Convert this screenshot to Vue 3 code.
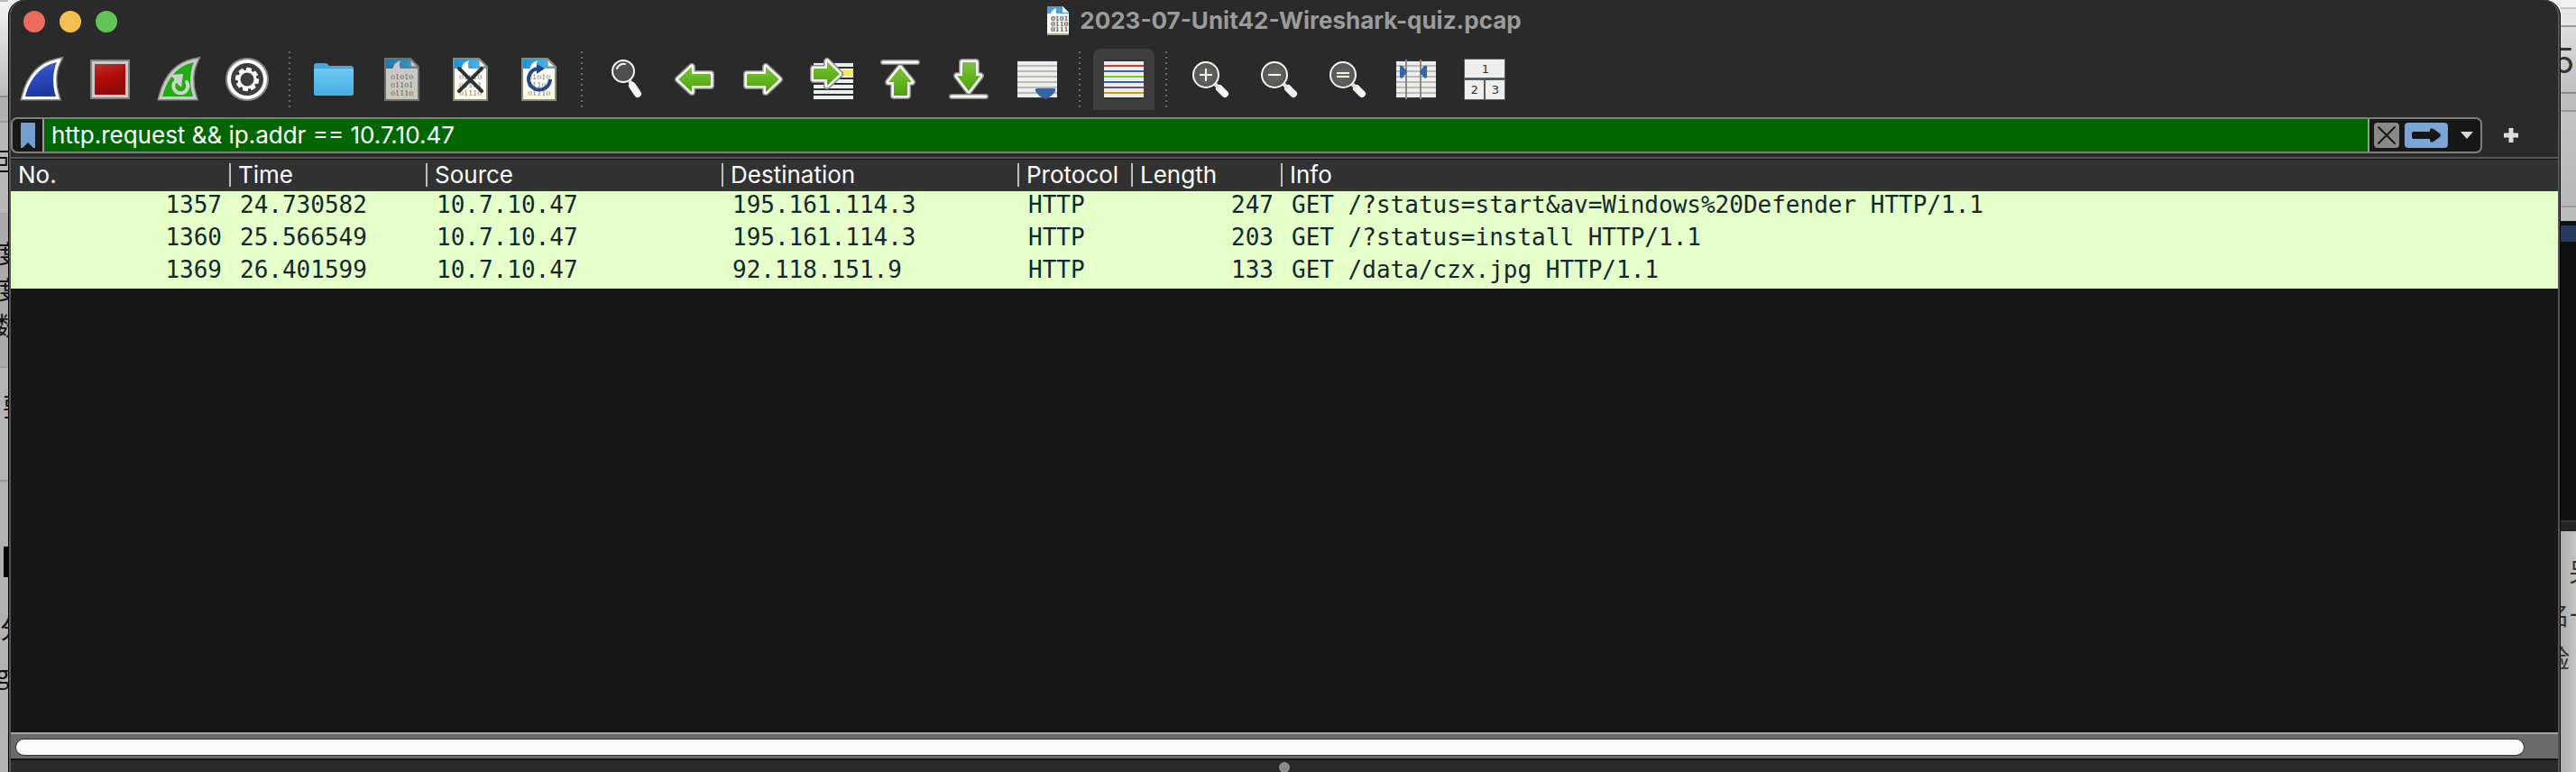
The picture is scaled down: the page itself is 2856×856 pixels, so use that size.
<script setup>
import { ref } from 'vue'

const filter = ref('http.request && ip.addr == 10.7.10.47')

const groups = [
  [
    { id: 'start', label: 'Start capturing packets' },
    { id: 'stop', label: 'Stop capturing packets' },
    { id: 'restart', label: 'Restart current capture' },
    { id: 'options', label: 'Capture options' },
  ],
  [
    { id: 'open', label: 'Open a capture file' },
    { id: 'save', label: 'Save this capture file' },
    { id: 'close', label: 'Close this capture file' },
    { id: 'reload', label: 'Reload this file' },
  ],
  [
    { id: 'find', label: 'Find a packet' },
    { id: 'back', label: 'Go back' },
    { id: 'forward', label: 'Go forward' },
    { id: 'goto', label: 'Go to packet' },
    { id: 'first', label: 'Go to first packet' },
    { id: 'last', label: 'Go to last packet' },
    { id: 'autoscroll', label: 'Auto scroll' },
  ],
  [{ id: 'colorize', label: 'Colorize packet list', active: true }],
  [
    { id: 'zoomin', label: 'Zoom in' },
    { id: 'zoomout', label: 'Zoom out' },
    { id: 'zoomreset', label: 'Normal size' },
    { id: 'columns', label: 'Resize columns' },
    { id: 'layout', label: 'Reset layout' },
  ],
]

const columns = [
  { key: 'no', title: 'No.', right: true },
  { key: 'time', title: 'Time' },
  { key: 'src', title: 'Source' },
  { key: 'dst', title: 'Destination' },
  { key: 'proto', title: 'Protocol' },
  { key: 'len', title: 'Length', right: true },
  { key: 'info', title: 'Info' },
]

const packets = [
  { no: '1357', time: '24.730582', src: '10.7.10.47', dst: '195.161.114.3', proto: 'HTTP', len: '247', info: 'GET /?status=start&av=Windows%20Defender HTTP/1.1' },
  { no: '1360', time: '25.566549', src: '10.7.10.47', dst: '195.161.114.3', proto: 'HTTP', len: '203', info: 'GET /?status=install HTTP/1.1' },
  { no: '1369', time: '26.401599', src: '10.7.10.47', dst: '92.118.151.9', proto: 'HTTP', len: '133', info: 'GET /data/czx.jpg HTTP/1.1' },
]

const ruleYs = [9, 15, 21, 27, 33, 39]
const ruleColors = ['#ef2929', '#3465a4', '#73d216', '#3465a4', '#75507b', '#c4a000']
const teeth = [0, 45, 90, 135, 180, 225, 270, 315]
const arrows = {
  back: 'M6 24L21 10V18H42V31H21V38Z',
  forward: 'M42 24L27 10V18H6V31H27V38Z',
  goto: 'M33 18L19 4V12H4V24H19V31Z',
  first: 'M24 11L37 27H32V42H17V27H11Z',
  last: 'M24 37L37 20H32V5H17V20H11Z',
}
</script>

<template>
  <div class="desktop">
    <div class="behind left" aria-hidden="true">
      <div class="l1"></div>
      <div class="l2"></div>
      <div class="l3"><span>距</span></div>
      <div class="l4"><span>度</span><span>度</span><span>数</span></div>
      <div class="l5"><span>要</span></div>
      <div class="l6"><i></i><span class="fen">分</span><span class="gee">g</span></div>
    </div>

    <main class="window">
      <header class="titlebar">
        <div class="lights">
          <button class="light red" aria-label="Close"></button>
          <button class="light yellow" aria-label="Minimize"></button>
          <button class="light green" aria-label="Zoom window"></button>
        </div>
        <h1 class="title">
          <svg width="24" height="32" viewBox="0 0 24 32">
            <path d="M0 0H17L24 7V32H0Z" fill="#fbfbee" />
            <path d="M0 0H17V7H24V8H0Z" fill="#4a9fd8" />
            <path d="M4 8Q6 3 10 2Q9 5 10 8Z" fill="#fff" />
            <path d="M17 0L24 7H17Z" fill="#eee" />
            <path d="M0 31H24" stroke="#a9a994" stroke-width="2" />
            <g class="bits" font-size="7" fill="#666">
              <text x="4" y="16">0101</text><text x="4" y="22">0110</text><text x="4" y="28">0111</text>
            </g>
          </svg>
          <span>2023-07-Unit42-Wireshark-quiz.pcap</span>
        </h1>
      </header>

      <nav class="toolbar" aria-label="Main toolbar">
        <svg class="defs" width="0" height="0" aria-hidden="true">
          <defs>
            <linearGradient id="gBlue" x1="0" y1="0" x2="0.3" y2="1"><stop offset="0" stop-color="#4a6fd4" /><stop offset="0.5" stop-color="#2a4bc0" /><stop offset="1" stop-color="#1f3a9c" /></linearGradient>
            <linearGradient id="gRed" x1="0" y1="0" x2="0.3" y2="1"><stop offset="0" stop-color="#b83430" /><stop offset="0.5" stop-color="#b00c0a" /><stop offset="1" stop-color="#8c0c0a" /></linearGradient>
            <linearGradient id="gGreen" x1="0" y1="0" x2="0" y2="1"><stop offset="0" stop-color="#7cc43a" /><stop offset="1" stop-color="#4ba40a" /></linearGradient>
            <linearGradient id="gFolder" x1="0" y1="0" x2="0" y2="1"><stop offset="0" stop-color="#6cc7f3" /><stop offset="1" stop-color="#46aee4" /></linearGradient>
            <linearGradient id="gSky" x1="0" y1="0" x2="1" y2="0"><stop offset="0" stop-color="#1c93d6" /><stop offset="1" stop-color="#42b4ee" /></linearGradient>
            <linearGradient id="gPaper" x1="0" y1="0" x2="0" y2="1"><stop offset="0.4" stop-color="#ffffff" /><stop offset="1" stop-color="#fffde0" /></linearGradient>
            <radialGradient id="gLens"><stop offset="0" stop-color="#6a6a68" /><stop offset="1" stop-color="#555553" /></radialGradient>
          </defs>
        </svg>
        <template v-for="(group, gi) in groups" :key="gi">
          <span v-if="gi" class="sep"></span>
          <div class="group">
            <button v-for="b in group" :key="b.id" class="tool" :class="{ active: b.active }" :aria-label="b.label">
              <svg width="48" height="48" viewBox="0 0 48 48">
                <template v-if="b.id === 'start' || b.id === 'restart'">
                  <path d="M6 43C11 24 22 9 41 5C36 16 36 31 40 43Z" stroke="#858585" stroke-width="9" stroke-miterlimit="3" />
                  <path d="M6 43C11 24 22 9 41 5C36 16 36 31 40 43Z" :stroke="b.id === 'start' ? '#fff' : '#c9c9c9'" stroke-width="6" stroke-miterlimit="3" />
                  <path d="M6 43C11 24 22 9 41 5C36 16 36 31 40 43Z" :fill="b.id === 'start' ? 'url(#gBlue)' : '#22ab12'" />
                  <g v-if="b.id === 'restart'">
                    <path d="M33 27A8 8 0 1 1 19 28" fill="none" stroke="#d0d0ce" stroke-width="4" stroke-linecap="round" />
                    <path d="M14 19L29 18L27 33L22 28L19 29V23Z" fill="#d0d0ce" />
                  </g>
                </template>
                <template v-else-if="b.id === 'stop'">
                  <rect x="2" y="2" width="44" height="44" fill="#828282" />
                  <rect x="4" y="4" width="40" height="40" fill="#cbcbcb" />
                  <rect x="7" y="7" width="34" height="34" fill="url(#gRed)" />
                </template>
                <template v-else-if="b.id === 'options'">
                  <circle cx="24" cy="24" r="24" fill="#8a8a8a" />
                  <circle cx="24" cy="24" r="22" fill="#fff" />
                  <circle cx="24" cy="24" r="18" fill="#3e3e3e" />
                  <rect v-for="t in teeth" :key="t" x="21" y="11" width="6" height="5" rx="1" fill="#fff" :transform="`rotate(${t + 10} 24 24)`" />
                  <circle cx="24" cy="24" r="9" fill="none" stroke="#fff" stroke-width="3" />
                </template>
                <template v-else-if="b.id === 'open'">
                  <path d="M2 9Q2 6 5 6H15Q17 6 19 9H43Q46 9 46 12V38H2Z" fill="#45a7da" />
                  <path d="M2 13H46V40Q46 42 44 42H4Q2 42 2 40Z" fill="url(#gFolder)" />
                  <path d="M3 13H45" stroke="#8fd6f7" />
                </template>
                <template v-else-if="['save', 'close', 'reload'].includes(b.id)">
                  <g :opacity="b.id === 'save' ? 0.75 : 1">
                    <path d="M5 1H33L42 10V47H5Z" fill="url(#gPaper)" />
                    <path d="M6 2H33V12H6Z" fill="url(#gSky)" />
                    <path d="M33 9H41V12H33Z" fill="#42b4ee" />
                    <path d="M13 13Q15 5 22 3Q20 8 22 13Z" fill="#fff" />
                    <path d="M33 1V10H42Z" fill="#f4f4f0" stroke="#888a80" />
                    <path d="M5 1H33L42 10V47H5Z" fill="none" stroke="#888a80" stroke-width="2" />
                    <g class="bits" font-size="8" fill="#7c7c72">
                      <text x="11" y="24">01010</text><text x="11" y="33">01101</text><text x="11" y="42">01110</text>
                    </g>
                  </g>
                  <path v-if="b.id === 'close'" d="M11 12L36 37M36 12L11 37" stroke="#2e3436" stroke-width="4" stroke-linecap="round" />
                  <g v-if="b.id === 'reload'">
                    <path d="M21 12A12 12 0 1 0 36 24" fill="none" stroke="#204a87" stroke-width="4" />
                    <path d="M21 7L30 12L21 18Z" fill="#204a87" />
                  </g>
                </template>
                <template v-else-if="b.id === 'find'">
                  <path d="M31 31L37 40" stroke="#f4f4f4" stroke-width="8" stroke-linecap="round" />
                  <path d="M28 26L31 30" stroke="#f4f4f4" stroke-width="4" />
                  <circle cx="21" cy="15" r="12" fill="#4f4f4f" stroke="#f8f8f8" stroke-width="2" />
                  <path d="M14 12A8 8 0 0 1 23 7" fill="none" stroke="#fff" stroke-width="2" stroke-linecap="round" />
                </template>
                <template v-else-if="arrows[b.id]">
                  <g v-if="b.id === 'goto'">
                    <rect x="4" y="4" width="44" height="43" fill="#2b3337" />
                    <rect v-for="y in [6, 12, 18, 24, 30, 36, 42]" :key="y" x="4" :y="y" width="44" height="4" fill="#eeeeec" />
                    <rect x="28" y="14" width="20" height="6" fill="#fce94f" />
                  </g>
                  <g v-if="b.id === 'first' || b.id === 'last'" stroke-linecap="round">
                    <path :d="b.id === 'first' ? 'M5 5H43' : 'M5 43H43'" stroke="#888a85" stroke-width="6" />
                    <path :d="b.id === 'first' ? 'M5 5H43' : 'M5 43H43'" stroke="#fff" stroke-width="3" />
                  </g>
                  <g stroke-linejoin="round">
                    <path :d="arrows[b.id]" fill="none" stroke="#888a85" stroke-width="8" />
                    <path :d="arrows[b.id]" fill="none" stroke="#fff" stroke-width="5" />
                    <path :d="arrows[b.id]" fill="url(#gGreen)" />
                  </g>
                </template>
                <template v-else-if="['autoscroll', 'colorize', 'columns'].includes(b.id)">
                  <rect x="2" y="2" width="44" height="44" fill="#2b3337" />
                  <rect x="2" y="4" width="44" height="40" fill="#eeeeec" />
                  <rect v-for="(y, i) in ruleYs" :key="y" x="2" :y="y - 1" width="44" height="2" :fill="b.id === 'colorize' ? ruleColors[i] : '#babdb6'" />
                  <path v-if="b.id === 'autoscroll'" d="M24 34H42Q45 34 44 37Q40 43 35 45Q33 46 31 45Q26 43 22 37Q21 34 24 34Z" fill="#3465a4" />
                  <g v-if="b.id === 'columns'">
                    <path d="M13 2V46M29 2V46" stroke="#888a85" stroke-width="2" />
                    <path d="M6 9Q8 8 10 10L14 16L10 21Q8 24 6 22ZM36 9Q34 8 32 10L28 16L32 21Q34 24 36 22Z" fill="#3465a4" />
                  </g>
                </template>
                <template v-else-if="b.id === 'layout'">
                  <rect x="1" y="1" width="46" height="46" fill="#555b5e" />
                  <path d="M2 2H46V22H2ZM2 25H23V46H2ZM25 25H46V46H25Z" fill="#eeeeec" />
                  <g class="digits" font-size="13" fill="#2e3436" text-anchor="middle">
                    <text x="25" y="17">1</text><text x="13" y="40">2</text><text x="36" y="40">3</text>
                  </g>
                </template>
                <template v-else>
                  <path d="M34 34L40 40" stroke="#f6f6f6" stroke-width="8" stroke-linecap="round" />
                  <path d="M29 29L34 34" stroke="#d8e8cc" stroke-width="4" />
                  <circle cx="19" cy="19" r="14" fill="url(#gLens)" stroke="#f6faf2" stroke-width="2" />
                  <path v-if="b.id === 'zoomin'" d="M12 19H26M19 12V26" stroke="#f0fbe8" stroke-width="2" />
                  <path v-if="b.id === 'zoomout'" d="M12 19H26" stroke="#f0fbe8" stroke-width="2" />
                  <path v-if="b.id === 'zoomreset'" d="M12 17H26M12 21H26" stroke="#e6f8d8" stroke-width="2" />
                </template>
              </svg>
            </button>
          </div>
        </template>
      </nav>

      <form class="filterrow" @submit.prevent>
        <div class="filterbox">
          <button type="button" class="bookmark" aria-label="Manage saved filters">
            <svg width="16" height="28" viewBox="0 0 16 28"><path d="M0 1Q0 0 1 0H15Q16 0 16 1V28H14L8 22L2 28H0Z" fill="#729fcf" /></svg>
          </button>
          <input v-model="filter" type="text" aria-label="Display filter" spellcheck="false" />
          <button type="button" class="clear" aria-label="Clear filter">
            <svg width="28" height="28" viewBox="0 0 28 28"><rect width="28" height="28" rx="4" fill="#888a85" /><path d="M5 5L23 23M23 5L5 23" stroke="#171717" stroke-width="2" stroke-linecap="round" /></svg>
          </button>
          <button type="submit" class="apply" aria-label="Apply filter">
            <svg width="48" height="28" viewBox="0 0 48 28"><rect width="48" height="28" rx="4" fill="#7aa5d4" /><path d="M10 10H28V8Q29 5 32 7L39 12Q41 14 39 16L32 21Q29 23 28 20V18H10Q8 18 8 16V12Q8 10 10 10Z" fill="#171717" /></svg>
          </button>
          <button type="button" class="recent" aria-label="Recent filters">
            <svg width="14" height="8" viewBox="0 0 14 8"><path d="M0 0H14L7 8Z" fill="#d6d6d0" /></svg>
          </button>
        </div>
        <button type="button" class="add" aria-label="Add filter button">
          <svg width="16" height="16" viewBox="0 0 16 16"><path d="M8 0V16M0 8H16" stroke="#dcdcdc" stroke-width="5" /></svg>
        </button>
      </form>

      <section class="packets">
        <table>
          <colgroup><col v-for="c in columns" :key="c.key" :class="'c-' + c.key" /></colgroup>
          <thead>
            <tr><th v-for="c in columns" :key="c.key" scope="col">{{ c.title }}</th></tr>
          </thead>
          <tbody>
            <tr v-for="p in packets" :key="p.no">
              <td v-for="c in columns" :key="c.key" :class="{ right: c.right }">{{ p[c.key] }}</td>
            </tr>
          </tbody>
        </table>
      </section>

      <div class="track"><div class="thumb"></div></div>
      <div class="splitter"><span></span></div>
    </main>

    <div class="behind rightside" aria-hidden="true">
      <div class="r1"></div>
      <div class="r2"></div>
      <div class="r3"><span>5</span></div>
      <div class="r4"></div>
      <div class="r5"></div>
      <div class="r6"></div>
      <div class="r7"></div>
      <div class="r8"></div>
      <div class="r9"></div>
      <div class="r10"><span class="far">另</span><span>名一</span><span>验</span></div>
    </div>
  </div>
</template>

<style>
body { background: #b4b4b4; }
</style>

<style scoped>
* { box-sizing: border-box; }
.desktop {
  display: grid;
  grid-template-columns: 9px minmax(0, 1fr) 17px;
  height: 100vh;
  overflow: hidden;
  background: linear-gradient(#eee, #bbb 160px);
  font-family: Inter, "Liberation Sans", "Noto Sans CJK SC", sans-serif;
}
button { appearance: none; border: 0; padding: 0; margin: 0; background: none; font: inherit; display: flex; align-items: center; justify-content: center; }
svg { display: block; overflow: visible; flex: none; }

.behind { display: flex; flex-direction: column; overflow: hidden; min-width: 0; height: 100vh; font-family: "Noto Sans CJK SC", sans-serif; font-size: 28px; line-height: 40px; color: #111; white-space: nowrap; }
.behind > div { flex: none; overflow: hidden; }
.behind span { display: block; }
.left span { text-indent: -17px; }
.l1 { height: 108px; background: linear-gradient(#f4f4f4, #bababa); border-bottom: 2px solid #8e8e8e; border-top: 2px solid #bbb; }
.l2 { height: 28px; background: #b0b0b0; border-bottom: 2px solid #9c9c9c; }
.l3 { height: 102px; background: #b8b8b8; border-bottom: 2px solid #a6a6a6; padding-top: 22px; }
.l4 { height: 170px; background: #aaa; border-bottom: 2px solid #9e9e9e; padding-top: 22px; }
.left .l4 span { text-indent: -6px; }
.l5 { height: 126px; background: #b5b5b5; border-bottom: 2px solid #999; padding-top: 22px; }
.left .l5 span { text-indent: 3px; }
.left .l6 { flex: 1; background: #b2b2b2; padding-top: 72px; }
.l6 i { display: block; height: 34px; margin-left: 4px; background: #060606; }
.left .fen { margin-top: 36px; text-indent: 0; }
.left .gee { margin-top: 10px; text-indent: -5px; }

.rightside { color: #333; }
.r1 { height: 10px; background: #f2f2f2; border-bottom: 2px solid #c8c8c8; }
.r2 { height: 20px; background: #e6e6e6; border-bottom: 2px solid #969696; }
.r3 { height: 74px; background: linear-gradient(#dedede, #bfbfbf); border-bottom: 2px solid #8a8a8a; font: 38px/74px Inter, sans-serif; text-indent: -8px; }
.r4 { height: 20px; background: #bdbdbd; border-bottom: 2px solid #999; }
.r5 { height: 106px; background: linear-gradient(#c2c2c2, #b8b8b8); border-bottom: 2px solid #999; }
.r6 { height: 15px; background: #bcbcbc; }
.r7 { height: 23px; background: #263b5e; border-top: 5px solid #111; }
.r8 { height: 309px; background: #101010; }
.r9 { height: 12px; background: #232323; border-top: 2px solid #333; }
.rightside .r10 { flex: 1; background: linear-gradient(90deg, #acacac, #c4c4c4); padding-top: 20px; line-height: 48px; }
.r10 span { text-indent: -18px; }
.r10 .far { text-indent: 9px; }

.window {
  display: flex;
  flex-direction: column;
  min-width: 0;
  height: 100vh;
  overflow: hidden;
  background: #2a2a2a;
  border: solid #000;
  border-width: 0 1px;
  border-radius: 18px 18px 0 0;
  box-shadow: inset 2px 0 #555, inset -2px 0 #555;
  padding: 0 2px;
}
.titlebar { display: grid; grid-template-columns: 1fr auto 1fr; align-items: center; height: 48px; flex: none; }
.lights { display: flex; gap: 16px; padding-left: 14px; }
.light { width: 24px; height: 24px; border-radius: 50%; }
.red { background: #ed6a5e; }
.yellow { background: #f5bf4f; }
.green { background: #61c554; }
.title { display: flex; align-items: center; gap: 12px; margin: 0; padding-bottom: 2px; font-size: 26px; line-height: 32px; font-weight: 700; color: #9b9b9b; }
.bits { font-family: "DejaVu Serif", serif; }
.digits { font-family: "DejaVu Sans", sans-serif; }

.toolbar { display: flex; align-items: center; height: 76px; flex: none; padding-top: 4px; }
.defs { position: absolute; }
.group { display: flex; gap: 8px; }
.tool { width: 68px; height: 68px; }
.tool.active { background: #3f3f3f; border-radius: 8px 8px 0 0; }
.sep { width: 2px; height: 62px; margin: 0 14px 0 12px; background: repeating-linear-gradient(#666 0 2px, transparent 2px 6px); }

.filterrow { display: flex; align-items: center; height: 50px; flex: none; padding-top: 2px; }
.filterbox { display: flex; flex: 1; align-items: center; min-width: 0; height: 40px; background: #171717; border: 2px solid #7f7f7f; border-radius: 7px; }
.bookmark { width: 33px; height: 36px; }
.filterbox input { flex: 1; min-width: 0; height: 36px; margin: 0; padding: 0 8px; border: solid #9a9a9a; border-width: 0 2px; border-radius: 0; outline: 0; background: #006700; color: #fff; font: 26px/36px Inter, sans-serif; }
.clear { margin-left: 5px; }
.apply { margin-left: 6px; }
.recent { width: 36px; height: 36px; padding: 0 7px 0 13px; }
.add { width: 84px; height: 40px; padding-right: 20px; }

.packets { flex: 1; min-height: 0; overflow: hidden; background: #171717; border-top: 2px solid #585858; }
table { width: 100%; table-layout: fixed; border-collapse: separate; border-spacing: 0; }
.c-no { width: 244px; }
.c-time { width: 218px; }
.c-src, .c-dst { width: 328px; }
.c-proto { width: 126px; }
.c-len { width: 166px; }
thead { background: #323232; box-shadow: inset 0 1px #111; }
th { height: 36px; padding: 0 8px; text-align: left; color: #fff; font-size: 26px; line-height: 32px; font-weight: 400; white-space: nowrap; background: linear-gradient(#bdbdbd, #bdbdbd) right center / 2px 26px no-repeat; }
th:last-child { background: none; }
td { height: 36px; padding: 0 10px 6px; line-height: 30px; font-family: "DejaVu Sans Mono", monospace; font-size: 26px; color: #12272e; background: #e4ffc7; white-space: nowrap; }
.right { text-align: right; }

.track { flex: none; height: 31px; padding: 6px 38px 4px 6px; background: #6b6b6b; border-top: 2px solid #a4a4a4; border-bottom: 2px solid #151515; }
.thumb { height: 17px; border-radius: 9px; background: #fafafa; box-shadow: 0 0 0 1px #333; }
.splitter { flex: none; height: 13px; display: flex; justify-content: center; padding-top: 2px; }
.splitter span { width: 12px; height: 12px; border-radius: 50%; background: #8c8c8c; flex: none; }
</style>
